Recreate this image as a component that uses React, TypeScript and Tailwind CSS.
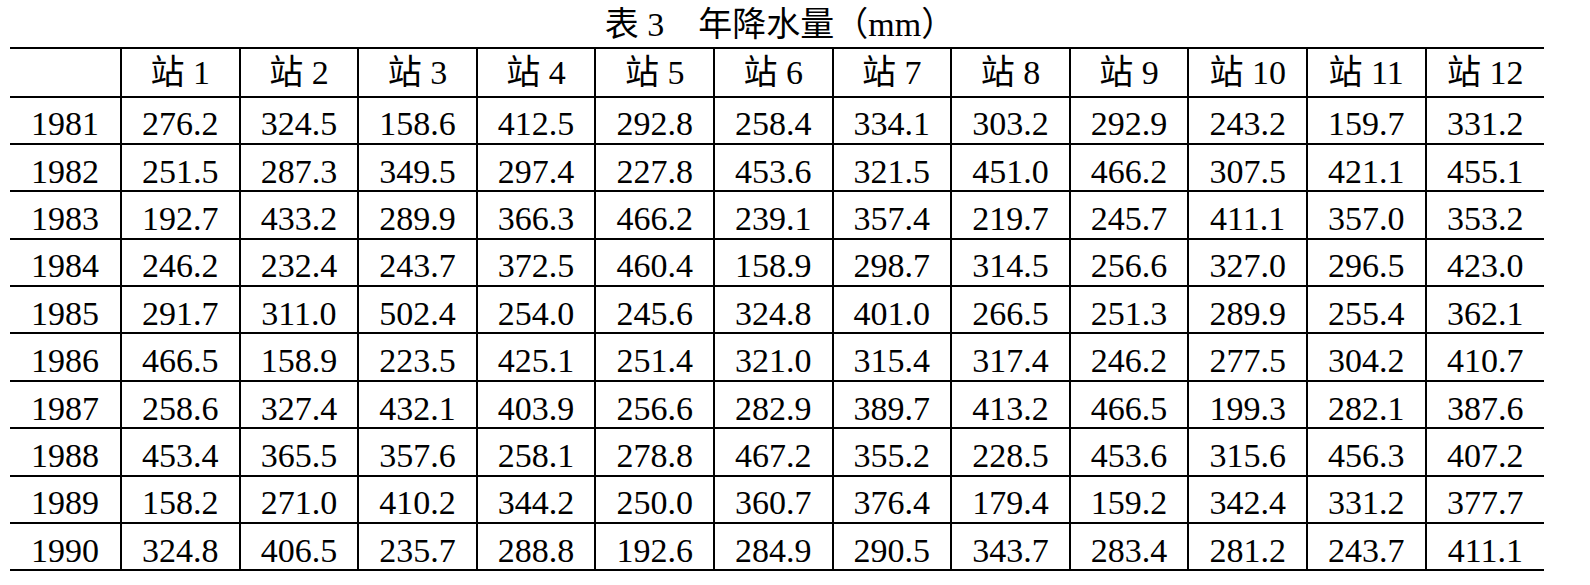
const stations = ['站 1', '站 2', '站 3', '站 4', '站 5', '站 6', '站 7', '站 8', '站 9', '站 10', '站 11', '站 12'];

const rows: [string, string[]][] = [
  ['1981', ['276.2', '324.5', '158.6', '412.5', '292.8', '258.4', '334.1', '303.2', '292.9', '243.2', '159.7', '331.2']],
  ['1982', ['251.5', '287.3', '349.5', '297.4', '227.8', '453.6', '321.5', '451.0', '466.2', '307.5', '421.1', '455.1']],
  ['1983', ['192.7', '433.2', '289.9', '366.3', '466.2', '239.1', '357.4', '219.7', '245.7', '411.1', '357.0', '353.2']],
  ['1984', ['246.2', '232.4', '243.7', '372.5', '460.4', '158.9', '298.7', '314.5', '256.6', '327.0', '296.5', '423.0']],
  ['1985', ['291.7', '311.0', '502.4', '254.0', '245.6', '324.8', '401.0', '266.5', '251.3', '289.9', '255.4', '362.1']],
  ['1986', ['466.5', '158.9', '223.5', '425.1', '251.4', '321.0', '315.4', '317.4', '246.2', '277.5', '304.2', '410.7']],
  ['1987', ['258.6', '327.4', '432.1', '403.9', '256.6', '282.9', '389.7', '413.2', '466.5', '199.3', '282.1', '387.6']],
  ['1988', ['453.4', '365.5', '357.6', '258.1', '278.8', '467.2', '355.2', '228.5', '453.6', '315.6', '456.3', '407.2']],
  ['1989', ['158.2', '271.0', '410.2', '344.2', '250.0', '360.7', '376.4', '179.4', '159.2', '342.4', '331.2', '377.7']],
  ['1990', ['324.8', '406.5', '235.7', '288.8', '192.6', '284.9', '290.5', '343.7', '283.4', '281.2', '243.7', '411.1']],
];

export default function App() {
  return (
    <div className="w-[1590px] h-[585px] bg-white text-black font-['Liberation_Serif','Noto_Sans_CJK_SC',serif] text-[34px] leading-none">
      {/* Caption */}
      <div className="h-[47px] flex items-center justify-center pr-[30px] pt-[2px]">
        表 3　年降水量（mm）
      </div>

      <table className="ml-[10px] w-[1534px] table-fixed border-collapse">
        <colgroup>
          <col className="w-[111px]" />
          {stations.map((s) => (
            <col key={s} className="w-[118.6px]" />
          ))}
        </colgroup>
        <thead>
          <tr className="h-[48.5px] border-y-2 border-black">
            <th className="font-normal"></th>
            {stations.map((s) => (
              <th key={s} className="font-normal text-center pt-[2px] border-l-2 border-black">
                {s}
              </th>
            ))}
          </tr>
        </thead>
        <tbody>
          {rows.map(([year, vals]) => (
            <tr key={year} className="h-[47.4px] border-b-2 border-black">
              <td className="text-center pt-[8px]">{year}</td>
              {vals.map((v, i) => (
                <td key={i} className="text-center pt-[8px] border-l-2 border-black">
                  {v}
                </td>
              ))}
            </tr>
          ))}
        </tbody>
      </table>
    </div>
  );
}
